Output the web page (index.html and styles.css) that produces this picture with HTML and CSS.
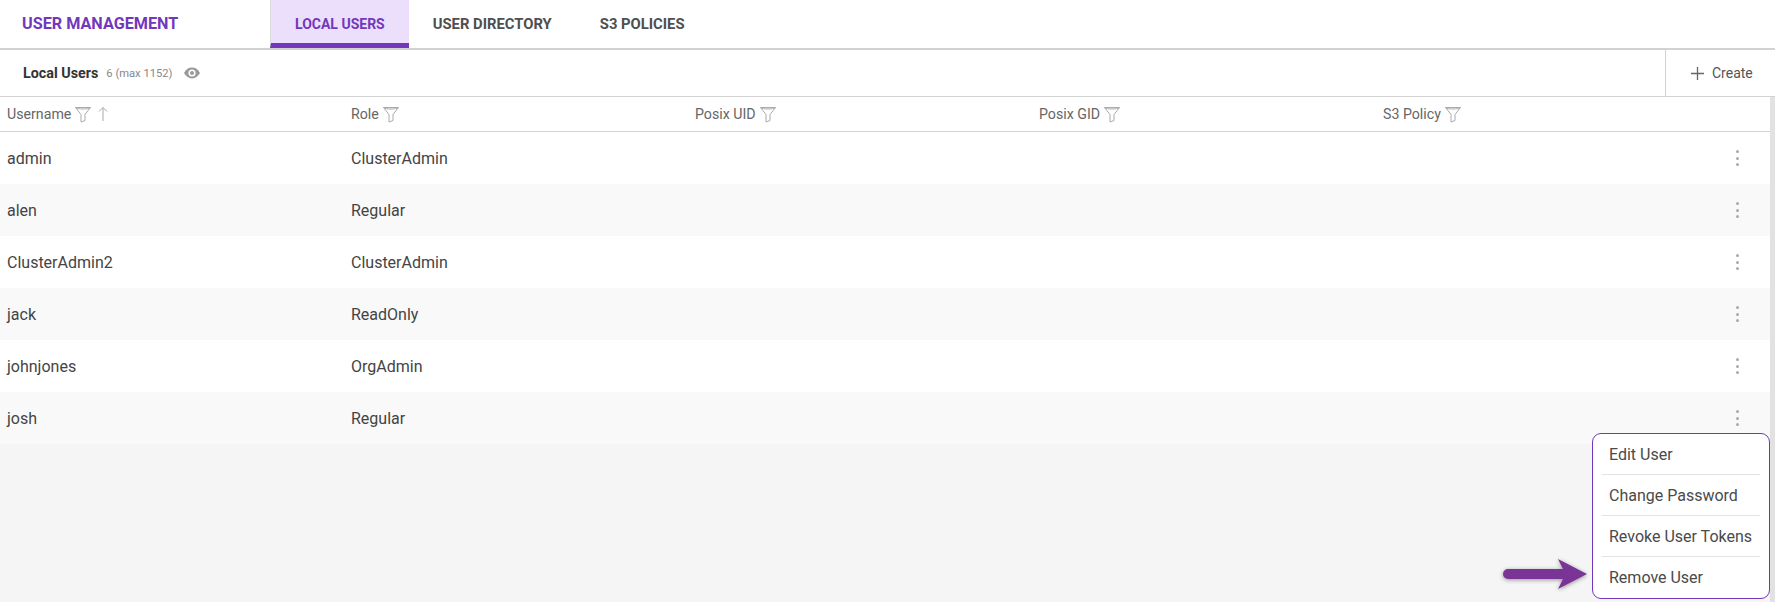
FILE: index.html
```html
<!DOCTYPE html>
<html>
<head>
    <title>User Management</title>
    <link rel="stylesheet" href="styles.css">
</head>
<body>
    <header class="topbar">
        <div class="page-title">USER MANAGEMENT</div>
        <nav class="tabs">
            <a class="tab tab-active">LOCAL USERS</a>
            <a class="tab">USER DIRECTORY</a>
            <a class="tab">S3 POLICIES</a>
        </nav>
    </header>

    <div class="subbar">
        <div class="subbar-info">
            <span class="subbar-title">Local Users</span>
            <span class="subbar-count">6 (max 1152)</span>
            <svg class="eye" width="18" height="18" viewBox="0 0 18 18"><path d="M1 9c2-3.600 4.800-5.400 8-5.400s6 1.800 8 5.400c-2 3.600-4.800 5.400-8 5.400S3 12.600 1 9z" fill="#999"/><circle cx="9" cy="9" r="3.600" fill="#fff"/><circle cx="9" cy="9" r="2" fill="#999"/></svg>
        </div>
        <button class="create">
            <svg width="15" height="15" viewBox="0 0 15 15"><path d="M7.500 1v13M1 7.500h13" stroke="#666" stroke-width="1.300" fill="none"/></svg>
            Create
        </button>
    </div>

    <div class="content">
        <div class="table">
            <div class="row row-head">
                <div class="cell">Username
                    <svg class="filter" width="18" height="18" viewBox="0 0 18 18"><path d="M1.500 2.500h15L11 9.500v6l-4 1.500V9.500zM1.500 2.500c2 2 13 2 15 0" fill="none" stroke="#aaa"/></svg>
                    <svg class="sort" width="10" height="16" viewBox="0 0 10 16"><path d="M5 15V1.500M1 5.500l4-4 4 4" fill="none" stroke="#aaa"/></svg>
                </div>
                <div class="cell">Role
                    <svg class="filter" width="18" height="18" viewBox="0 0 18 18"><path d="M1.500 2.500h15L11 9.500v6l-4 1.500V9.500zM1.500 2.500c2 2 13 2 15 0" fill="none" stroke="#aaa"/></svg>
                </div>
                <div class="cell">Posix UID
                    <svg class="filter" width="18" height="18" viewBox="0 0 18 18"><path d="M1.500 2.500h15L11 9.500v6l-4 1.500V9.500zM1.500 2.500c2 2 13 2 15 0" fill="none" stroke="#aaa"/></svg>
                </div>
                <div class="cell">Posix GID
                    <svg class="filter" width="18" height="18" viewBox="0 0 18 18"><path d="M1.500 2.500h15L11 9.500v6l-4 1.500V9.500zM1.500 2.500c2 2 13 2 15 0" fill="none" stroke="#aaa"/></svg>
                </div>
                <div class="cell">S3 Policy
                    <svg class="filter" width="18" height="18" viewBox="0 0 18 18"><path d="M1.500 2.500h15L11 9.500v6l-4 1.500V9.500zM1.500 2.500c2 2 13 2 15 0" fill="none" stroke="#aaa"/></svg>
                </div>
            </div>
            <div class="row"><div class="cell">admin</div><div class="cell">ClusterAdmin</div><div class="cell"></div><div class="cell"></div><div class="cell"></div><div class="dots"><i></i><i></i><i></i></div></div>
            <div class="row"><div class="cell">alen</div><div class="cell">Regular</div><div class="cell"></div><div class="cell"></div><div class="cell"></div><div class="dots"><i></i><i></i><i></i></div></div>
            <div class="row"><div class="cell">ClusterAdmin2</div><div class="cell">ClusterAdmin</div><div class="cell"></div><div class="cell"></div><div class="cell"></div><div class="dots"><i></i><i></i><i></i></div></div>
            <div class="row"><div class="cell">jack</div><div class="cell">ReadOnly</div><div class="cell"></div><div class="cell"></div><div class="cell"></div><div class="dots"><i></i><i></i><i></i></div></div>
            <div class="row"><div class="cell">johnjones</div><div class="cell">OrgAdmin</div><div class="cell"></div><div class="cell"></div><div class="cell"></div><div class="dots"><i></i><i></i><i></i></div></div>
            <div class="row"><div class="cell">josh</div><div class="cell">Regular</div><div class="cell"></div><div class="cell"></div><div class="cell"></div><div class="dots"><i></i><i></i><i></i></div></div>
        </div>
        <div class="scrollbar"></div>
    </div>

    <ul class="menu">
        <li>Edit User</li>
        <li>Change Password</li>
        <li>Revoke User Tokens</li>
        <li>Remove User</li>
    </ul>

    <svg class="arrow" width="90" height="36" viewBox="0 0 90 36"><path d="M8 13H63L58 3l29 15-29 15 5-10H8a5 5 0 0 1 0-10z" fill="#7a3496"/></svg>
</body>
</html>
```

FILE: styles.css
```css
html, body {
    margin: 0;
    height: 602px;
    overflow: hidden;
}

body {
    position: relative;
    background-color: #f5f5f5;
    font-family: "Roboto", "Liberation Sans", sans-serif;
    color: #444;
}

.topbar {
    display: flex;
    height: 48px;
    background-color: #fff;
    border-bottom: 2px solid #d2d2d2;
}

.page-title {
    box-sizing: border-box;
    width: 270px;
    padding-left: 22px;
    line-height: 48px;
    font-size: 16.200px;
    font-weight: 700;
    color: #7337bb;
}

.tabs {
    display: flex;
}

.tab {
    box-sizing: border-box;
    height: 48px;
    padding: 0 24px;
    line-height: 49px;
    font-size: 14.800px;
    font-weight: 700;
    color: #4f4f4f;
}

.tab-active {
    background-color: #ecdffb;
    border-bottom: 5px solid #7337bb;
    border-left: 1px solid #ddd;
    font-size: 14px;
    color: #7337bb;
}

.subbar {
    display: flex;
    justify-content: space-between;
    height: 46px;
    background-color: #fff;
    border-bottom: 1px solid #d2d2d2;
}

.subbar-info {
    display: flex;
    align-items: center;
    padding-left: 23px;
}

.subbar-title {
    font-size: 14.300px;
    font-weight: 700;
    color: #333;
}

.subbar-count {
    margin-left: 8px;
    font-size: 11.200px;
    color: #888;
}

.eye {
    margin-left: 11px;
}

.create {
    display: flex;
    align-items: center;
    gap: 7px;
    box-sizing: border-box;
    width: 110px;
    padding: 0 0 0 24px;
    border: 0;
    border-left: 1px solid #d2d2d2;
    background: none;
    font-family: inherit;
    font-size: 14px;
    color: #555;
}

.content {
    display: flex;
    align-items: flex-start;
}

.table {
    width: 1770px;
    flex: none;
}

.row {
    display: flex;
    align-items: center;
    height: 52px;
    background-color: #fff;
}

.row:nth-child(odd) {
    background-color: #f9f9f9;
}

.row-head,
.row-head:nth-child(odd) {
    box-sizing: border-box;
    height: 35px;
    background-color: #fff;
    border-bottom: 1px solid #d2d2d2;
    color: #666;
}

.cell {
    display: flex;
    flex: none;
    align-items: center;
    gap: 3px;
    box-sizing: border-box;
    width: 344px;
    padding-left: 7px;
    font-size: 16px;
}

.row-head .cell {
    font-size: 14.200px;
}

.sort {
    margin-left: 3px;
}

.dots {
    display: flex;
    flex-direction: column;
    gap: 3.500px;
    margin-left: 16px;
}

.dots i {
    width: 3px;
    height: 3px;
    border-radius: 50%;
    background-color: #aaa;
}

.scrollbar {
    width: 5px;
    height: 506px;
    background-color: #e2e2e2;
}

.menu {
    position: absolute;
    left: 1592px;
    top: 433px;
    box-sizing: border-box;
    width: 178px;
    height: 166px;
    margin: 0;
    padding: 0 9px;
    list-style: none;
    background-color: #fff;
    border: 1px solid #7337bb;
    border-radius: 9px;
}

.menu li {
    box-sizing: border-box;
    height: 41px;
    padding-left: 7px;
    line-height: 41px;
    font-size: 16px;
    color: #4a4a4a;
    border-bottom: 1px solid #e2e2e2;
}

.menu li:last-child {
    border-bottom: 0;
}

.arrow {
    position: absolute;
    left: 1500px;
    top: 556px;
    filter: drop-shadow(0 1px 2px rgba(0, 0, 0, 0.4));
}
```
